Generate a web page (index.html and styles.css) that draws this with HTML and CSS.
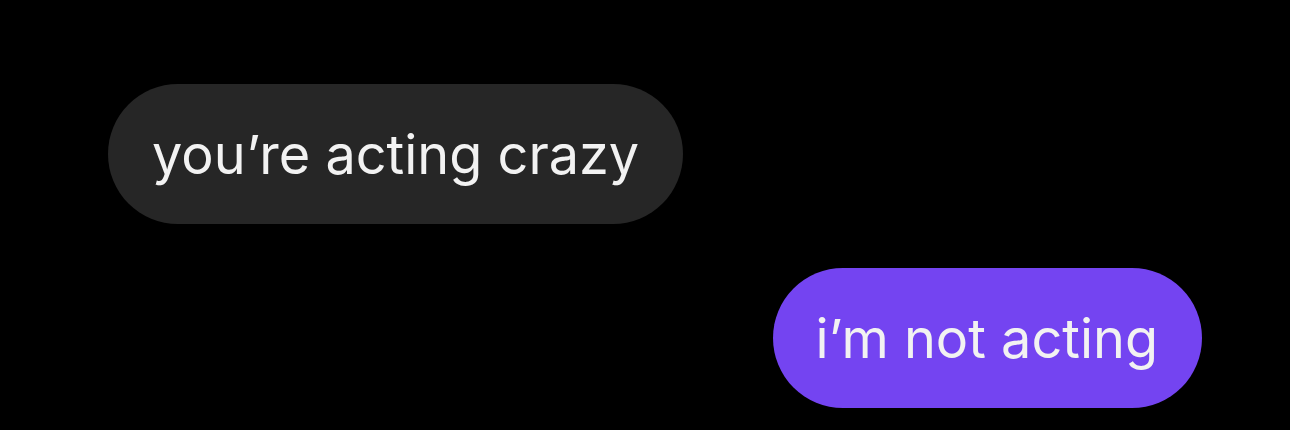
FILE: index.html
```html
<!DOCTYPE html>
<html lang="en">

<head>
    <meta charset="utf-8">
    <meta name="viewport" content="width=device-width, initial-scale=1.0">
    <title>Messages</title>
    <link rel="stylesheet" href="styles.css">
</head>

<body>
    <section class="chat">
        <div class="row in">
            <p class="bubble grey">you’re acting crazy</p>
        </div>
        <div class="row out">
            <p class="bubble purple">i’m not acting</p>
        </div>
    </section>
</body>

</html>
```
FILE: styles.css
```css
* {
    margin: 0;
    box-sizing: border-box;
}

body {
    background: #000;
    width: 1290px;
    height: 430px;
    overflow: hidden;
}

.chat {
    display: flex;
    flex-direction: column;
    gap: 44px;
    padding: 84px 88px 0 108px;
}

.row {
    display: flex;
}

.row.out {
    justify-content: flex-end;
}

.bubble {
    height: 140px;
    border-radius: 70px;
    padding: 0 44px;
    display: flex;
    align-items: center;
    font-family: Inter, 'Noto Sans', sans-serif;
    font-size: 54px;
    color: #f2f2f2;
    letter-spacing: 0;
}

.grey {
    background: #262626;
}

.purple {
    background: #7444f1;
    padding-left: 42px;
}
```
